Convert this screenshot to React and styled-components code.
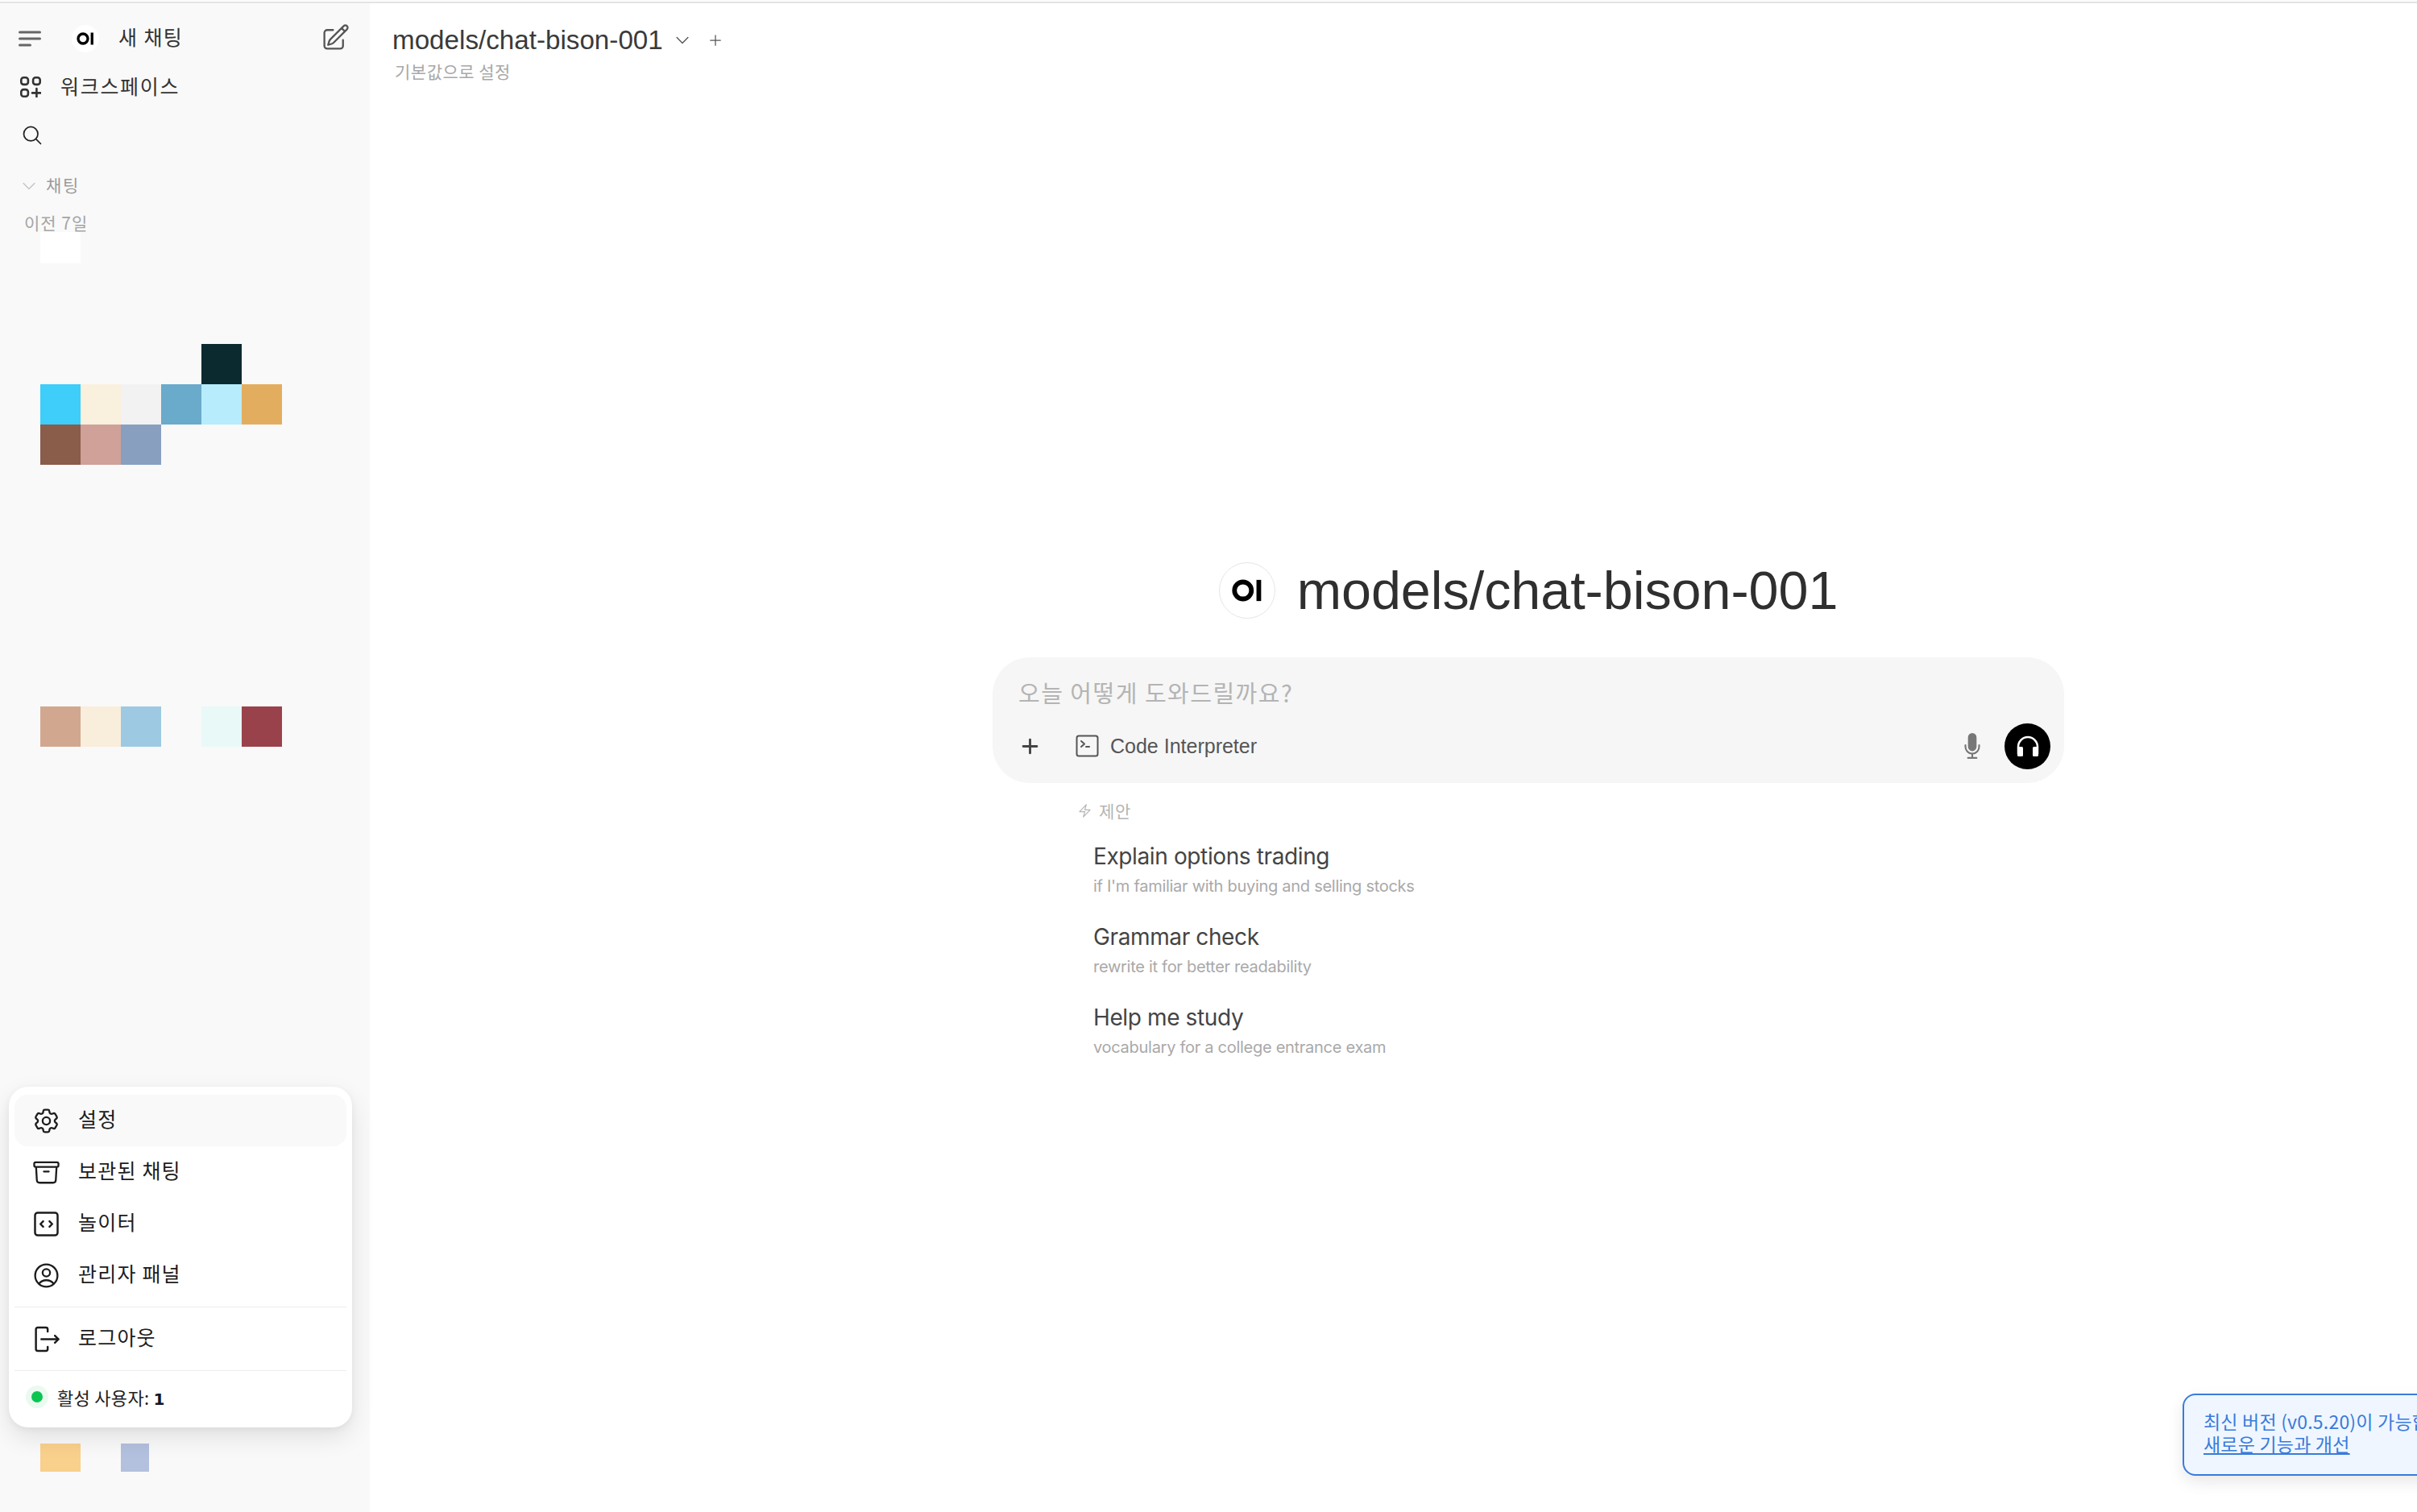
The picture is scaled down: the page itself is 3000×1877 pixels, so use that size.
import React from "react";
import styled, { createGlobalStyle } from "styled-components";
import {
  HiOutlineMagnifyingGlass,
  HiOutlinePencilSquare,
  HiOutlineCog6Tooth,
  HiOutlineArchiveBox,
  HiOutlineUserCircle,
  HiOutlineBolt,
  HiMicrophone,
  HiChevronDown,
  HiPlus,
} from "react-icons/hi2";

const SANS = `"Liberation Sans", "Noto Sans CJK KR", sans-serif`;
const KR = `"Noto Sans CJK KR", "Liberation Sans", sans-serif`;

const Global = createGlobalStyle`
  html, body { margin: 0; padding: 0; background: #fff; overflow: hidden; }
  * { box-sizing: border-box; }
`;

const Page = styled.div`
  width: 3000px; height: 1877px; display: flex; flex-direction: column;
  overflow: hidden; position: relative; font-family: ${KR}; background: #fff;
`;
const TopRule = styled.div`
  height: 4px; flex: none; background: #fff; border-top: 1px solid #fafafa; border-bottom: 2px solid #e3e3e3;
`;
const Body = styled.div`flex: 1; display: flex; min-height: 0;`;

const Sidebar = styled.aside`
  width: 459px; flex: none; background: #f9f9f9; position: relative;
  display: flex; flex-direction: column; padding-top: 14px;
`;
const NavRow = styled.div`
  height: ${p => p.$h || 60}px; display: flex; align-items: center; flex: none;
  padding-left: ${p => p.$pl || 23}px; color: #333; font-size: 25px;
`;
const LogoDisc = styled.span`
  width: ${p => p.$size}px; height: ${p => p.$size}px; border-radius: 50%; background: #fff; flex: none;
  display: inline-flex; align-items: center; justify-content: center;
  ${p => p.$ring && `border: 1.5px solid #e6e6e6;`}
`;
const NewChatLabel = styled.span`margin: -7px 0 0 24px; letter-spacing: 1.4px; flex: 1;`;
const Spacer = styled.span`width: ${p => p.$w}px; flex: none;`;
const WorkspaceLabel = styled.span`margin: -4px 0 0 24px; letter-spacing: 1.7px; white-space: nowrap;`;
const EditIcon = styled(HiOutlinePencilSquare)`
  width: 37px; height: 37px; color: #555; margin-right: 24px; margin-top: -4px; flex: none;
`;
const Section = styled.div`
  margin-top: 14px; height: 40px; display: flex; align-items: center; padding-left: 25px;
  font-size: 21px; color: #9b9b9b; gap: 10px; flex: none; letter-spacing: 1.6px;
  span { margin-top: -4px; }
`;
const SectionChevron = styled(HiChevronDown)`width: 22px; height: 22px; color: #c4c4c4;`;
const TimeLabel = styled.div`
  margin-top: 16px; height: 21px; line-height: 18px; padding-left: 30px;
  font-size: 21px; color: #a5a5a5; flex: none; letter-spacing: 1px; white-space: nowrap;
`;
const SwatchGrid = styled.div`
  margin-left: 50px; display: grid; flex: none;
  grid-template-columns: repeat(6, 50px);
  grid-template-rows: 39px repeat(12, 50px);
`;
const Swatch = styled.div`
  background: ${p => p.$c};
  grid-column: ${p => p.$col};
  grid-row: ${p => p.$row};
`;
const BottomSwatches = styled.div`
  margin-top: auto; margin-bottom: 50px; margin-left: 50px; height: 35px;
  display: grid; grid-template-columns: 50px 50px 35px; flex: none;
`;

const Menu = styled.div`
  position: absolute; left: 11px; top: 1345px; width: 426px; height: 423px;
  background: #fff; border-radius: 24px; padding: 10px 7px 0;
  box-shadow: 0 12px 30px rgba(0,0,0,.10), 0 2px 8px rgba(0,0,0,.05);
`;
const MenuItem = styled.div`
  height: ${p => p.$h || 64}px; border-radius: 16px; display: flex; align-items: center;
  padding-left: 21px; gap: 21px; font-size: 25px; color: #1c1c1c; letter-spacing: 1.2px;
  background: ${p => (p.$active ? "#f9f9f9" : "transparent")};
  svg { width: 37px; height: 37px; flex: none; }
`;
const MenuText = styled.span`margin-top: -6px;`;
const MenuRule = styled.div`height: 1px; background: #ececec; margin: ${p => p.$m};`;
const StatusRow = styled.div`
  height: 64px; display: flex; align-items: center; padding-left: 21px; gap: 18px;
  font-size: 22px; color: #222; letter-spacing: 0.3px;
`;
const Dot = styled.span`
  width: 14px; height: 14px; border-radius: 50%; background: #0bc452; flex: none;
  box-shadow: 0 0 0 7px #eafaf0;
`;
const Count = styled.b`font-family: "DejaVu Sans", sans-serif; font-size: 20px; color: #111827;`;

const Main = styled.main`flex: 1; min-width: 0; position: relative; overflow: hidden; display: flex; flex-direction: column;`;
const Header = styled.header`padding: 26px 0 0 28px; height: 120px; flex: none;`;
const ModelLine = styled.div`
  display: flex; align-items: center; font-family: ${SANS}; font-size: 33.2px; line-height: 40px; color: #3a3a3a;
  svg { flex: none; }
`;
const HeaderChevron = styled(HiChevronDown)`width: 22px; height: 22px; margin-left: 13px; color: #555;`;
const HeaderPlus = styled(HiPlus)`width: 20px; height: 20px; margin-left: 20px; color: #555;`;
const DefaultLabel = styled.div`
  margin: 5px 0 0 3px; font-size: 21px; line-height: 26px; color: #a8a8a8; letter-spacing: 0.5px;
`;
const Hero = styled.section`
  margin: 574px 0 0 773px; width: 1330px; display: flex; flex-direction: column; flex: none;
`;
const TitleRow = styled.div`display: flex; align-items: center; justify-content: center; gap: 27px; height: 70px;`;
const Title = styled.h1`
  margin: 0; font-family: ${SANS}; font-weight: 400; font-size: 66.4px; line-height: 70px; color: #2f2f2f;
`;
const InputCard = styled.div`
  margin-top: 48px; height: 156px; border-radius: 46px; background: #f6f6f6; padding: 0 17px 0 32px;
  display: flex; flex-direction: column;
`;
const Placeholder = styled.div`
  margin-top: 25px; height: 36px; line-height: 36px; font-size: 29px; color: #b4b4b4; letter-spacing: 1.5px; white-space: nowrap;
`;
const Toolbar = styled.div`margin: 21px 0 0 2px; height: 56px; display: flex; align-items: center;`;
const ToolPlus = styled(HiPlus)`width: 27px; height: 27px; color: #444; flex: none; margin-left: -1px; stroke-width: 1;`;
const ToolIcon = styled.span`margin-left: 43px; display: inline-flex; flex: none;`;
const ToolLabel = styled.span`
  margin-left: 14px; font-family: ${SANS}; font-size: 25px; line-height: 34px; color: #555; flex: 1; white-space: nowrap;
`;
const Mic = styled(HiMicrophone)`width: 34px; height: 34px; color: #777; flex: none; margin-right: 23px;`;
const VoiceButton = styled.span`
  width: 57px; height: 57px; border-radius: 50%; background: #000; flex: none;
  display: flex; align-items: center; justify-content: center;
`;
const Suggestions = styled.section`margin: 19px 0 0 105px; display: flex; flex-direction: column;`;
const SuggestHead = styled.div`
  display: flex; align-items: center; gap: 8px; height: 30px; font-size: 21px; color: #b5b5b5; letter-spacing: 0.7px;
  svg { width: 19px; height: 19px; }
`;
const SuggestList = styled.div`margin: 19px 0 0 20px; display: flex; flex-direction: column; gap: 14px;`;
const SuggestItem = styled.div`height: 86px; padding-top: 4px;`;
const SuggestTitle = styled.div`
  font-family: Inter, sans-serif; font-size: 28px; line-height: 38px; color: #444; letter-spacing: -0.38px; white-space: nowrap;
`;
const SuggestSub = styled.div`
  font-family: Inter, sans-serif; font-size: 20px; line-height: 30px; margin-top: 3px; color: #a9a9a9; letter-spacing: -0.28px; white-space: nowrap;
`;

const Toast = styled.div`
  position: absolute; left: 2709px; top: 1730px; width: 420px; height: 102px;
  border: 2px solid #3a7bdb; border-radius: 16px; background: #eff6ff; color: #3a7bdb;
  padding: 18px 0 0 24px; font-size: 23px; line-height: 28px; white-space: nowrap; letter-spacing: 0.2px;
  box-shadow: 0 8px 20px rgba(0,0,0,.09);
`;
const ToastLine = styled.div`font-family: ${KR};`;
const ToastLink = styled.span`text-decoration: underline;`;

const OILogo = ({ size = 34 }) => (
  <svg width={size} height={size} viewBox="0 0 40 40">
    <circle cx="15" cy="20" r="10" fill="none" stroke="#000" strokeWidth="5.5" />
    <rect x="31" y="7.500" width="5.500" height="25" fill="#000" />
  </svg>
);
const SideIcon = () => (
  <svg width="28" height="20" viewBox="0 0 28 20" fill="none" stroke="#666" strokeWidth="3" strokeLinecap="round">
    <path d="M1.5 2h25M1.5 10h25M1.5 18h13" />
  </svg>
);
const WorkspaceIcon = () => (
  <svg width="26" height="26" viewBox="0 0 26 26" fill="none" stroke="#333" strokeWidth="2.6">
    <rect x="1.3" y="1.3" width="8.600" height="8.600" rx="3" />
    <rect x="16.100" y="1.3" width="8.600" height="8.600" rx="3" />
    <rect x="1.3" y="16.100" width="8.600" height="8.600" rx="3" />
    <path d="M20.400 15v10.500M15 20.400H25.500" strokeLinecap="round" />
  </svg>
);
const CodeBox = () => (
  <svg viewBox="0 0 33 33" fill="none" stroke="#1c1c1c" strokeWidth="2.2" strokeLinecap="round" strokeLinejoin="round">
    <rect x="4" y="4" width="25" height="25" rx="3" />
    <path d="M13 13.5l-3 3 3 3M20 13.5l3 3-3 3" />
  </svg>
);
const LogoutIcon = () => (
  <svg viewBox="0 0 33 33" fill="none" stroke="#1c1c1c" strokeWidth="2.2" strokeLinecap="round" strokeLinejoin="round">
    <path d="M18 8V5.5A2 2 0 0 0 16 3.500H7a2 2 0 0 0-2 2v22a2 2 0 0 0 2 2h9a2 2 0 0 0 2-2V25" />
    <path d="M11 16.500h19M26 12.500l4 4-4 4" />
  </svg>
);
const TerminalIcon = () => (
  <svg width="29" height="28" viewBox="0 0 29 28" fill="none" stroke="#555" strokeWidth="2" strokeLinecap="round" strokeLinejoin="round">
    <rect x="1.500" y="1.500" width="26" height="25" rx="2.500" />
    <path d="M7 8l4 3.500-4 3.500M13 15h4" />
  </svg>
);
const HeadphoneIcon = () => (
  <svg width="30" height="28" viewBox="0 0 30 28" fill="none">
    <path d="M3 24V15a12 12 0 0 1 24 0v9" stroke="#fff" strokeWidth="2.500" />
    <rect x="2" y="15" width="7" height="12" rx="1.500" fill="#fff" />
    <rect x="21" y="15" width="7" height="12" rx="1.500" fill="#fff" />
  </svg>
);

const swatches = [
  ["#ffffff", 1, 1],
  ["#0b2a30", 5, 4],
  ["#3fcdf9", 1, 5], ["#faf0de", 2, 5], ["#f2f2f2", 3, 5], ["#6aaaca", 4, 5], ["#b6ecfb", 5, 5], ["#e3ad5f", 6, 5],
  ["#8a5c4a", 1, 6], ["#cfa199", 2, 6], ["#889fc0", 3, 6],
  ["#d1a88f", 1, 13], ["#f9eddb", 2, 13], ["#9dc9e2", 3, 13], ["#e9f9f8", 5, 13], ["#99424b", 6, 13],
];
const suggestions = [
  ["Explain options trading", "if I'm familiar with buying and selling stocks"],
  ["Grammar check", "rewrite it for better readability"],
  ["Help me study", "vocabulary for a college entrance exam"],
];

export default function App() {
  return (
    <Page>
      <Global />
      <TopRule />
      <Body>
        <Sidebar>
          <NavRow>
            <SideIcon />
            <Spacer $w={38} />
            <LogoDisc $size={34}><OILogo size={24} /></LogoDisc>
            <NewChatLabel>새 채팅</NewChatLabel>
            <EditIcon />
          </NavRow>
          <NavRow $pl={25}>
            <WorkspaceIcon />
            <WorkspaceLabel>워크스페이스</WorkspaceLabel>
          </NavRow>
          <NavRow $h={59} $pl={26}>
            <HiOutlineMagnifyingGlass size={28} color="#222" />
          </NavRow>
          <Section>
            <SectionChevron />
            <span>채팅</span>
          </Section>
          <TimeLabel>이전 7일</TimeLabel>
          <SwatchGrid>
            {swatches.map(([c, col, row]) => (
              <Swatch key={c + col + row} $c={c} $col={col} $row={row} />
            ))}
          </SwatchGrid>
          <BottomSwatches>
            <Swatch $c="#f9d08c" $col={1} $row={1} />
            <Swatch $c="#b3c0de" $col={3} $row={1} />
          </BottomSwatches>
          <Menu>
            <MenuItem $active><HiOutlineCog6Tooth color="#1c1c1c" /><MenuText>설정</MenuText></MenuItem>
            <MenuItem><HiOutlineArchiveBox color="#1c1c1c" /><MenuText>보관된 채팅</MenuText></MenuItem>
            <MenuItem><CodeBox /><MenuText>놀이터</MenuText></MenuItem>
            <MenuItem><HiOutlineUserCircle color="#1c1c1c" /><MenuText>관리자 패널</MenuText></MenuItem>
            <MenuRule $m="7px 0 0" />
            <MenuItem $h={78}><LogoutIcon /><MenuText>로그아웃</MenuText></MenuItem>
            <MenuRule $m="0" />
            <StatusRow><Dot /><span>활성 사용자: <Count>1</Count></span></StatusRow>
          </Menu>
        </Sidebar>
        <Main>
          <Header>
            <ModelLine>
              models/chat-bison-001
              <HeaderChevron />
              <HeaderPlus />
            </ModelLine>
            <DefaultLabel>기본값으로 설정</DefaultLabel>
          </Header>
          <Hero>
            <TitleRow>
              <LogoDisc $size={70} $ring><OILogo size={42} /></LogoDisc>
              <Title>models/chat-bison-001</Title>
            </TitleRow>
            <InputCard>
              <Placeholder>오늘 어떻게 도와드릴까요?</Placeholder>
              <Toolbar>
                <ToolPlus />
                <ToolIcon><TerminalIcon /></ToolIcon>
                <ToolLabel>Code Interpreter</ToolLabel>
                <Mic />
                <VoiceButton><HeadphoneIcon /></VoiceButton>
              </Toolbar>
            </InputCard>
            <Suggestions>
              <SuggestHead><HiOutlineBolt />제안</SuggestHead>
              <SuggestList>
                {suggestions.map(([t, s]) => (
                  <SuggestItem key={t}>
                    <SuggestTitle>{t}</SuggestTitle>
                    <SuggestSub>{s}</SuggestSub>
                  </SuggestItem>
                ))}
              </SuggestList>
            </Suggestions>
          </Hero>
        </Main>
      </Body>
      <Toast>
        <ToastLine>최신 버전 (v0.5.20)이 가능합니다.</ToastLine>
        <ToastLine><ToastLink>새로운 기능과 개선</ToastLink></ToastLine>
      </Toast>
    </Page>
  );
}
